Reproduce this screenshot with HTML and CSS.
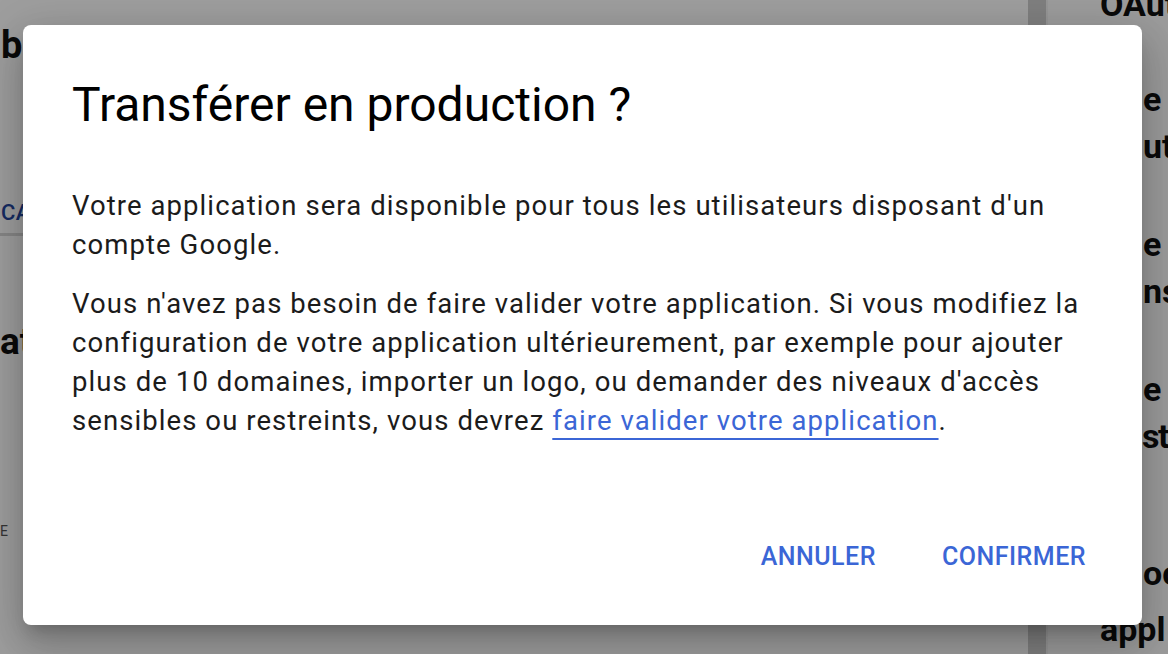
FILE: index.html
```html
<!DOCTYPE html>
<html lang="fr">
<head>
<meta charset="utf-8">
<title>Transférer en production ?</title>
<link rel="stylesheet" href="styles.css">
</head>
<body>
<div class="page">
  <div class="main">
    <div class="main-title">b</div>
    <div class="main-btn">CATION</div>
    <div class="main-rule"></div>
    <div class="main-head">at</div>
    <div class="main-small">E</div>
  </div>
  <div class="scroll"></div>
  <div class="sep"></div>
  <div class="side">
    <div class="side-top">OAuth</div>
    <div class="side-line l1">e</div>
    <div class="side-line l2">ut</div>
    <div class="side-line l3">e</div>
    <div class="side-line l2">ns</div>
    <div class="side-line l3">e</div>
    <div class="side-line l2 tight">str</div>
    <div class="side-line l4">oc</div>
    <div class="side-full">appl</div>
  </div>
</div>
<div class="overlay">
  <div class="dialog" role="dialog">
    <h1 class="dialog-title">Transférer en production ?</h1>
    <div class="dialog-body">
      <p>Votre application sera disponible pour tous les utilisateurs disposant d'un compte Google.</p>
      <p>Vous n'avez pas besoin de faire valider votre application. Si vous modifiez la configuration de votre application ultérieurement, par exemple pour ajouter plus de 10 domaines, importer un logo, ou demander des niveaux d'accès sensibles ou restreints, vous devrez <a class="link" href="#">faire valider votre application</a>.</p>
    </div>
    <div class="dialog-actions">
      <button class="btn">ANNULER</button>
      <button class="btn">CONFIRMER</button>
    </div>
  </div>
</div>
</body>
</html>
```

FILE: styles.css
```css
html, body {
  margin: 0;
  padding: 0;
}
body {
  width: 1168px;
  height: 654px;
  overflow: hidden;
  position: relative;
  font-family: Roboto, "Liberation Sans", Arial, sans-serif;
  background: #fff;
  color: #202124;
}

/* background page */
.page {
  display: flex;
  height: 654px;
  overflow: hidden;
}
.main {
  flex: 0 0 1028px;
  overflow: hidden;
  background: #ffffff;
}
.main-title {
  margin-top: 24px;
  padding-left: 1px;
  font-size: 38px;
  line-height: 42px;
  font-weight: 700;
  color: #111;
}
.main-btn {
  margin-top: 134px;
  padding-left: 1px;
  font-size: 22px;
  line-height: 26px;
  font-weight: 500;
  color: #24469f;
  letter-spacing: 0.5px;
}
.main-rule {
  margin-top: 7px;
  height: 3px;
  background: #d9d9d9;
}
.main-head {
  margin-top: 86px;
  font-size: 37px;
  line-height: 40px;
  font-weight: 700;
  color: #111;
}
.main-small {
  margin-top: 160px;
  font-size: 14px;
  line-height: 18px;
  color: #555;
}
.scroll {
  flex: 0 0 18px;
  background: #cdcdcd;
}
.sep {
  flex: 0 0 2px;
  background: #f3f3f3;
}
.side {
  flex: 1;
  overflow: hidden;
  background: #fcfcfc;
  padding-left: 52px;
}
.side-top {
  margin-top: -16px;
  font-size: 34px;
  line-height: 40px;
  font-weight: 700;
  color: #111;
}
.side-line {
  padding-left: 43px;
  font-size: 34px;
  line-height: 47px;
  font-weight: 700;
  color: #111;
}
.side-line.tight {
  padding-left: 42px;
  letter-spacing: -1.5px;
}
.side-line.l1 { margin-top: 52px; }
.side-line.l3 { margin-top: 51px; }
.side-line.l4 { margin-top: 90px; }
.side-full {
  margin-top: 9px;
  font-size: 34px;
  line-height: 47px;
  font-weight: 700;
  color: #111;
}

/* overlay + dialog */
.overlay {
  position: absolute;
  inset: 0;
  background: rgba(0, 0, 0, 0.38);
  display: flex;
  align-items: flex-start;
  padding: 25px 0 0 23px;
}
.dialog {
  box-sizing: border-box;
  width: 1119px;
  height: 600px;
  background: #fff;
  border-radius: 8px;
  padding: 52px 48px 50px 49px;
  display: flex;
  flex-direction: column;
  box-shadow: 0 11px 15px -7px rgba(0,0,0,.2), 0 24px 38px 3px rgba(0,0,0,.14), 0 9px 46px 8px rgba(0,0,0,.12);
}
.dialog-title {
  margin: 0;
  font-size: 48px;
  line-height: 56px;
  font-weight: 400;
  color: #000;
}
.dialog-body {
  margin-top: 53px;
  font-size: 27.5px;
  line-height: 39.3px;
  letter-spacing: 1.08px;
  color: #1b1b1b;
}
.dialog-body p {
  margin: 0;
}
.dialog-body p + p {
  margin-top: 19px;
}
.link {
  color: #3b66d6;
  text-decoration: underline;
  text-decoration-thickness: 2px;
  text-underline-offset: 8px;
}
.dialog-actions {
  margin-top: auto;
  display: flex;
  justify-content: flex-end;
  gap: 66px;
  padding-right: 8px;
}
.btn {
  border: 0;
  background: none;
  padding: 0;
  font-family: Roboto, "Liberation Sans", Arial, sans-serif;
  font-size: 25px;
  line-height: 36px;
  font-weight: 500;
  letter-spacing: 0.5px;
  color: #3b66d6;
}
```
